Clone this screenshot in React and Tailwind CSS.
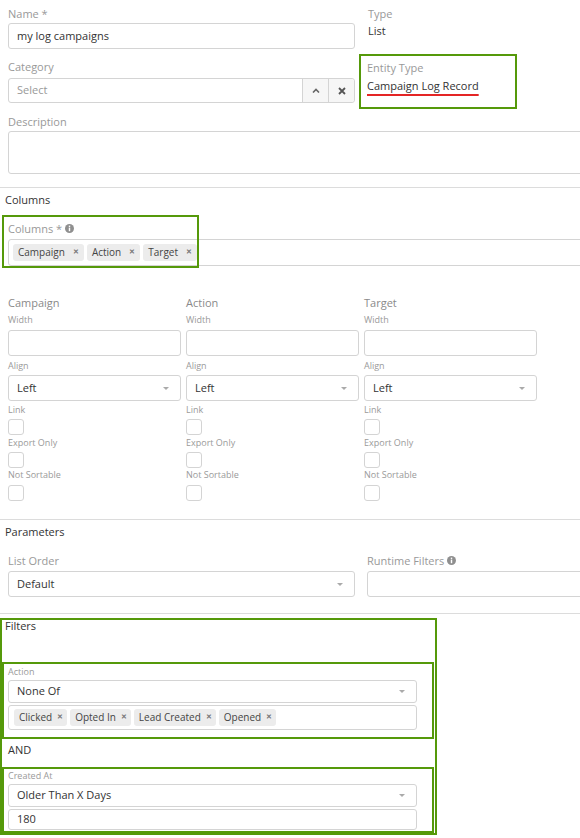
const font = { fontFamily: '"Open Sans", "Liberation Sans", sans-serif' }

function Caret() {
  return (
    <svg width="6" height="3" viewBox="0 0 6 3" className="shrink-0">
      <path d="M0 0h6L3 3z" fill="#aaa" />
    </svg>
  )
}

function InfoIcon() {
  return (
    <svg width="9" height="9" viewBox="0 0 10 10" className="ml-[3px] inline-block">
      <circle cx="5" cy="5" r="5" fill="#8f8f8f" />
      <rect x="4.2" y="4" width="1.6" height="4" fill="#fff" />
      <rect x="4.2" y="1.8" width="1.6" height="1.5" fill="#fff" />
    </svg>
  )
}

function Tag({ label, compact = false }) {
  return (
    <span
      className={
        compact
          ? 'flex h-[17px] items-center gap-[5px] rounded-[3px] bg-[#ececec] pl-[5px] pr-[4px] text-[10px] text-[#444]'
          : 'flex h-[17px] items-center gap-[8px] rounded-[3px] bg-[#ececec] pl-[5px] pr-[5px] text-[10px] text-[#444]'
      }
    >
      {label}
      <span className="text-[7px] font-bold text-[#777]">✕</span>
    </span>
  )
}

function SelectBox({ value, className = 'h-[26px]' }) {
  return (
    <div className={`flex items-center justify-between rounded-[3px] border border-[#d4d4d4] bg-white pl-[8px] pr-[11px] text-[11px] text-[#333] ${className}`}>
      <span>{value}</span>
      <Caret />
    </div>
  )
}

function Checkbox({ className = '' }) {
  return <div className={`h-[16px] w-[16px] rounded-[3px] border border-[#d4d4d4] bg-white ${className}`} />
}

function ColumnConfig({ title }) {
  return (
    <div className="w-[173px]">
      <div className="text-[11px] leading-[15px] text-[#8a8a8a]">{title}</div>
      <div className="mt-[4px] text-[9px] leading-[12px] text-[#9a9a9a]">Width</div>
      <div className="mt-[4px] h-[26px] rounded-[3px] border border-[#d4d4d4]" />
      <div className="mt-[4px] text-[9px] leading-[12px] text-[#9a9a9a]">Align</div>
      <SelectBox value="Left" className="mt-[3px] h-[26px]" />
      <div className="mt-[3px] text-[9px] leading-[12px] text-[#9a9a9a]">Link</div>
      <Checkbox className="mt-[3px]" />
      <div className="mt-[2px] text-[9px] leading-[12px] text-[#9a9a9a]">Export Only</div>
      <Checkbox className="mt-[3px]" />
      <div className="mt-[1px] text-[9px] leading-[12px] text-[#9a9a9a]">Not Sortable</div>
      <Checkbox className="mt-[4px] h-[15px]" />
    </div>
  )
}

export default function App() {
  return (
    <div className="h-[838px] w-[580px] overflow-hidden bg-white" style={font}>
      {/* General */}
      <div className="flex gap-[4px] px-2 pt-[6px]">
        <div className="w-[347px] shrink-0">
          <div className="text-[11px] leading-[15px] text-[#999]">Name *</div>
          <div className="mt-[2px] flex h-[26px] items-center rounded-[3px] border border-[#d4d4d4] px-[8px] text-[11px] text-[#333]">
            my log campaigns
          </div>
          <div className="mt-[10px] text-[11px] leading-[15px] text-[#999]">Category</div>
          <div className="mt-[4px] flex h-[25px] rounded-[3px] border border-[#d4d4d4]">
            <div className="flex flex-1 items-center px-[8px] text-[11px] text-[#999]">Select</div>
            <div className="flex w-[26px] items-center justify-center border-l border-[#d4d4d4] bg-[#f6f6f6]">
              <svg width="8" height="5" viewBox="0 0 8 5">
                <path d="M1 4.5L4 1.5L7 4.5" stroke="#666" strokeWidth="1.6" fill="none" />
              </svg>
            </div>
            <div className="flex w-[26px] items-center justify-center rounded-r-[3px] border-l border-[#d4d4d4] bg-[#f6f6f6]">
              <svg width="8" height="8" viewBox="0 0 8 8">
                <path d="M1 1L7 7M7 1L1 7" stroke="#555" strokeWidth="1.8" />
              </svg>
            </div>
          </div>
        </div>
        <div className="flex-1">
          <div className="pl-[9px]">
            <div className="text-[11px] leading-[15px] text-[#999]">Type</div>
            <div className="mt-[2px] text-[11px] leading-[15px] text-[#333]">List</div>
          </div>
          <div className="mt-[16px] h-[55px] w-[158px] border-2 border-[#55990a] pl-[6px] pt-[4px]">
            <div className="text-[11px] leading-[15px] text-[#999]">Entity Type</div>
            <div className="mt-[3px] text-[11px] leading-[15px] text-[#333]">
              <span className="underline decoration-[#e42525] decoration-[1.5px] underline-offset-[4px]">
                Campaign Log Record
              </span>
            </div>
          </div>
        </div>
      </div>

      <div className="px-2">
        <div className="mt-[5px] text-[11px] leading-[15px] text-[#999]">Description</div>
        <div className="mt-[2px] h-[43px] w-[600px] rounded-[3px] border border-[#d4d4d4]" />
      </div>

      {/* Columns */}
      <div className="mt-[13px] border-t border-[#dcdcdc]">
        <div className="mt-[4px] pl-[5px] text-[11px] leading-[15px] text-[#333]">Columns</div>
        <div className="relative mt-[14px] pl-2">
          <div className="flex items-center text-[11px] leading-[15px] text-[#999]">
            Columns *<InfoIcon />
          </div>
          <div className="mt-[3px] flex h-[27px] w-[600px] items-center gap-[3px] rounded-[3px] border border-[#d4d4d4] pl-[4px]">
            <Tag label="Campaign" />
            <Tag label="Action" />
            <Tag label="Target" />
          </div>
          <div className="pointer-events-none absolute left-[2px] top-[-6px] h-[53px] w-[197px] border-2 border-[#55990a]" />
        </div>

        <div className="mt-[29px] flex gap-[5px] px-2">
          <ColumnConfig title="Campaign" />
          <ColumnConfig title="Action" />
          <ColumnConfig title="Target" />
        </div>
      </div>

      {/* Parameters */}
      <div className="mt-[18px] border-t border-[#dcdcdc]">
        <div className="mt-[4px] pl-[5px] text-[11px] leading-[15px] text-[#333]">Parameters</div>
        <div className="mt-[14px] flex gap-[12px] pl-2">
          <div className="w-[347px] shrink-0">
            <div className="text-[11px] leading-[15px] text-[#999]">List Order</div>
            <SelectBox value="Default" className="mt-[3px] h-[26px]" />
          </div>
          <div className="flex-1">
            <div className="flex items-center text-[11px] leading-[15px] text-[#999]">
              Runtime Filters<InfoIcon />
            </div>
            <div className="mt-[3px] h-[26px] w-[240px] rounded-[3px] border border-[#d4d4d4]" />
          </div>
        </div>
      </div>

      {/* Filters */}
      <div className="mt-[16px] border-t border-[#dcdcdc]">
        <div className="mt-[4px] h-[217px] w-[437px] border-2 border-[#55990a]">
          <div className="pl-[3px] text-[11px] leading-[12px] text-[#333]">Filters</div>
          <div className="mt-[30px] h-[77px] w-[432px] border-2 border-[#55990a] pl-[4px] pt-[2px]">
            <div className="text-[9px] leading-[12px] text-[#9a9a9a]">Action</div>
            <SelectBox value="None Of" className="mt-[2px] h-[23px] w-[409px]" />
            <div className="mt-[2px] flex h-[25px] w-[409px] items-center gap-[3px] rounded-[3px] border border-[#d4d4d4] pl-[5px]">
              <Tag compact label="Clicked" />
              <Tag compact label="Opted In" />
              <Tag compact label="Lead Created" />
              <Tag compact label="Opened" />
            </div>
          </div>
          <div className="mt-[3px] pl-[6px] text-[11px] leading-[15px] text-[#333]">AND</div>
          <div className="mt-[10px] h-[66px] w-[432px] border-2 border-[#55990a] pl-[4px] pt-[1px]">
            <div className="text-[9px] leading-[12px] text-[#9a9a9a]">Created At</div>
            <SelectBox value="Older Than X Days" className="mt-[2px] h-[23px] w-[409px]" />
            <div className="mt-[2px] flex h-[21px] w-[409px] items-center rounded-[3px] border border-[#d4d4d4] pl-[8px] text-[11px] text-[#333]">
              180
            </div>
          </div>
        </div>
      </div>
    </div>
  )
}
